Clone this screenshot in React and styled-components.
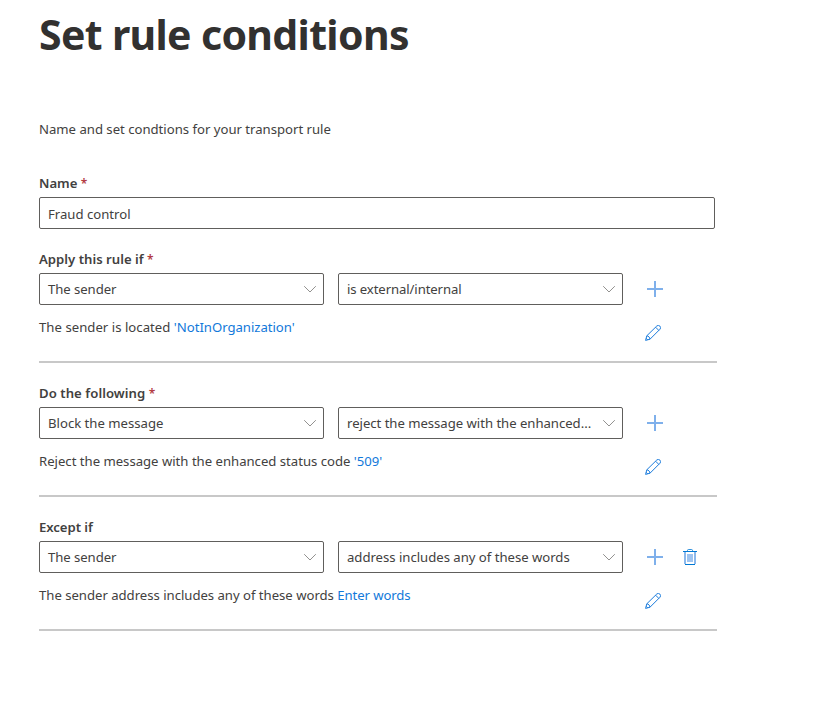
import React from "react";
import styled, { createGlobalStyle } from "styled-components";

const GlobalStyle = createGlobalStyle`
  *, *::before, *::after { box-sizing: border-box; }
  body {
    margin: 0;
    background: #fff;
    color: #424140;
    font-family: "Noto Sans", "Open Sans", sans-serif;
    font-size: 13.15px;
    line-height: 20px;
  }
`;

const Page = styled.main`
  display: flex;
  flex-direction: column;
  width: 717px;
  padding: 8px 0 0 39px;
`;

const Title = styled.h1`
  margin: 0;
  color: #323130;
  font-size: 41px;
  font-weight: 700;
  line-height: 52px;
  letter-spacing: -0.66px;
  white-space: nowrap;
`;

const Intro = styled.p`
  margin: 59px 0 34px;
  letter-spacing: -0.01px;
`;

const Text = styled.span`
  letter-spacing: ${(p) => p.$spacing || 0}px;
  white-space: pre;
`;

const Label = styled.label`
  display: block;
  height: 24px;
  font-weight: 600;
  letter-spacing: ${(p) => p.$spacing || 0}px;
`;

const Required = styled.span`
  color: #b23a42;
  font-weight: 600;
  font-size: 12px;
`;

const NameField = styled.div`
  width: 676px;
  margin-bottom: 20px;
`;

const NameInput = styled.input`
  display: block;
  width: 100%;
  height: 32px;
  padding: 2px 8px 0;
  border: 1px solid #605e5c;
  border-radius: 2px;
  outline: none;
  background: #fff;
  color: inherit;
  font: inherit;
`;

const Section = styled.section`
  margin-bottom: 20px;
  border-bottom: 2px solid #c8c8c8;
`;

const Controls = styled.div`
  display: flex;
  align-items: center;
  gap: 14px;
`;

const Dropdown = styled.div`
  display: flex;
  align-items: center;
  justify-content: space-between;
  width: 285px;
  height: 32px;
  padding: 0 6px 0 8px;
  border: 1px solid #605e5c;
  border-radius: 2px;
`;

const Actions = styled.div`
  display: flex;
  align-items: center;
  gap: 19px;
  margin-left: 10px;
`;

const IconButton = styled.button`
  display: block;
  width: 16px;
  height: 16px;
  padding: 0;
  border: 0;
  background: none;
  color: #1a7bdc;
  svg { display: block; }
`;

const TallIconButton = styled(IconButton)`
  height: 18px;
`;

const Summary = styled.div`
  display: flex;
  justify-content: space-between;
  height: 56px;
  padding: 12px 56px 0 0;
`;

const SummaryAction = styled.div`
  padding-top: 8px;
`;

const Link = styled.a`
  color: #1279da;
  letter-spacing: ${(p) => p.$spacing || 0}px;
`;

const Chevron = () => (
  <svg width="14" height="14" viewBox="0 0 14 14" fill="none" stroke="#868482" strokeWidth="0.9">
    <path d="M1.2 4.2 7 10 12.8 4.2" />
  </svg>
);

const Plus = () => (
  <svg width="16" height="16" viewBox="0 0 16 16" fill="#1a73dc" fillOpacity="0.56">
    <path d="M0 7h16v2H0z" />
    <path d="M7 0h2v7H7zM7 9h2v7H7z" />
  </svg>
);

const Pencil = () => (
  <svg width="16" height="16" viewBox="0 0 16 16" fill="none" stroke="currentColor" strokeWidth="1">
    <path d="M.6 15.4 1.8 10.8 11.7 1.1a2.25 2.25 0 0 1 3.2 3.2L5 14.2Z" />
    <path d="M10.6 2.2 13.8 5.4M1.8 10.8C3.4 10.9 4.9 12.4 5 14.2M1.2 13.3 2.7 14.8" />
  </svg>
);

const Trash = () => (
  <svg width="16" height="18" viewBox="0 0 16 18">
    <path d="M5.5 3V2.3C5.5 1.8 5.9 1.5 6.5 1.5h3c.6 0 1 .3 1 .8V3" fill="none" stroke="#0078d4" strokeOpacity="0.8" />
    <path d="M1 3h14v1H1z" fill="#0078d4" />
    <path d="M2 4h2v12H2zM12 4h2v12h-2z" fill="#1a73dc" fillOpacity="0.5" />
    <path d="M3 16h10v1H3z" fill="#0078d4" />
    <path d="M5 6h6v8H5z" fill="#1a73dc" fillOpacity="0.42" />
  </svg>
);

const rules = [
  {
    label: "Apply this rule if", required: true, labelSpacing: 0.01,
    first: "The sender", firstSpacing: -0.06,
    second: "is external/internal", secondSpacing: -0.1,
    summary: "The sender is located ", summarySpacing: 0.03,
    link: "'NotInOrganization'", linkSpacing: -0.03,
  },
  {
    label: "Do the following", required: true, labelSpacing: 0.05,
    first: "Block the message", firstSpacing: 0,
    second: "reject the message with the enhanced...", secondSpacing: -0.03,
    summary: "Reject the message with the enhanced status code ", summarySpacing: -0.01,
    link: "'509'", linkSpacing: 0,
  },
  {
    label: "Except if", labelSpacing: -0.05,
    first: "The sender", firstSpacing: -0.06,
    second: "address includes any of these words", secondSpacing: -0.02,
    summary: "The sender address includes any of these words ", summarySpacing: -0.02,
    link: "Enter words", linkSpacing: -0.09, removable: true,
  },
];

function RuleSection({ rule }) {
  return (
    <Section>
      <Label as="div" $spacing={rule.labelSpacing}>
        {rule.label} {rule.required && <Required>*</Required>}
      </Label>
      <Controls>
        <Dropdown>
          <Text $spacing={rule.firstSpacing}>{rule.first}</Text>
          <Chevron />
        </Dropdown>
        <Dropdown>
          <Text $spacing={rule.secondSpacing}>{rule.second}</Text>
          <Chevron />
        </Dropdown>
        <Actions>
          <IconButton aria-label="Add"><Plus /></IconButton>
          {rule.removable && <TallIconButton aria-label="Delete"><Trash /></TallIconButton>}
        </Actions>
      </Controls>
      <Summary>
        <div>
          <Text $spacing={rule.summarySpacing}>{rule.summary}</Text>
          <Link $spacing={rule.linkSpacing}>{rule.link}</Link>
        </div>
        <SummaryAction>
          <IconButton aria-label="Edit"><Pencil /></IconButton>
        </SummaryAction>
      </Summary>
    </Section>
  );
}

export default function App() {
  return (
    <>
      <GlobalStyle />
      <Page>
        <Title>Set rule conditions</Title>
        <Intro>Name and set condtions for your transport rule</Intro>
        <NameField>
          <Label htmlFor="rule-name">Name <Required>*</Required></Label>
          <NameInput id="rule-name" defaultValue="Fraud control" />
        </NameField>
        {rules.map((rule) => <RuleSection key={rule.label} rule={rule} />)}
      </Page>
    </>
  );
}
